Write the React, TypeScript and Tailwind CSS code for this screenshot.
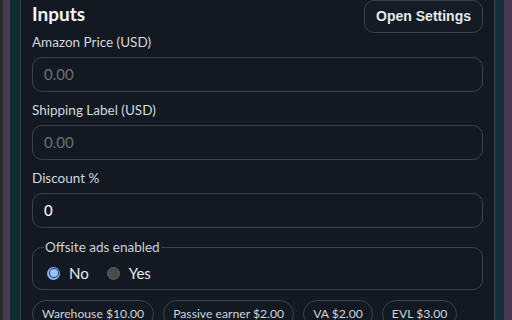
import React from "react";

const font = { fontFamily: "Lato, 'Noto Sans', sans-serif" };

function Field({ label, value, placeholder, first }: { label: string; value?: string; placeholder?: string; first?: boolean }) {
  return (
    <div className={first ? "mt-[0px]" : "mt-[8px]"}>
      <div className="text-[13.5px] leading-[20px] text-[#d3d8de] mb-[5px]">{label}</div>
      <div className="h-[35px] rounded-[10px] border border-[#3a424c] bg-[#121922] flex items-center px-[11px]">
        {value !== undefined ? (
          <span className="text-[15px] text-[#f3f4f6] font-medium">{value}</span>
        ) : (
          <span className="text-[15px] text-[#6a7079]">{placeholder}</span>
        )}
      </div>
    </div>
  );
}

function Chip({ text }: { text: string }) {
  return (
    <div className="h-[28px] rounded-full border border-[#3a424c] px-[9px] flex items-center text-[12.2px] text-[#cfd4da] whitespace-nowrap">
      {text}
    </div>
  );
}

export default function App() {
  return (
    <div className="w-[512px] h-[320px] overflow-hidden flex bg-[#131a23]" style={font}>
      <div className="w-[3px] bg-[#2e2a33]" />
      <div className="w-[7px] bg-[#463b4f]" />
      <div className="w-[10px] bg-[#0f2d30]" />
      <div className="flex-1 border-x border-[#34454c] bg-[#121922] px-[11px]">
        <div className="flex justify-between items-start h-[32px]">
          <div className="text-[19px] leading-[24px] font-bold text-[#f2f4f7] mt-[2px]">Inputs</div>
          <button
            className="h-[33px] rounded-[10px] border border-[#3a424c] bg-[#141b24] px-[11px] text-[14px] font-bold text-[#e6e9ed]"
            style={{ fontFamily: "'Liberation Sans', Arial, sans-serif" }}
          >
            Open Settings
          </button>
        </div>
        <Field first label="Amazon Price (USD)" placeholder="0.00" />
        <Field label="Shipping Label (USD)" placeholder="0.00" />
        <Field label="Discount %" value="0" />
        <fieldset className="mt-[11px] rounded-[10px] border border-[#3a424c] px-[11px] h-[51px]">
          <legend className="px-[1px] text-[13.5px] leading-[16px] text-[#cdd2d8]">Offsite ads enabled</legend>
          <div className="flex items-center mt-[8px] h-[20px]">
            <span className="w-[13px] h-[13px] rounded-full bg-[#8ab4f8] border-[2px] border-[#8ab4f8] flex items-center justify-center ml-[3px]">
              <span className="w-[8px] h-[8px] rounded-full bg-[#9cc2ff] ring-1 ring-[#1d3a5e]" />
            </span>
            <span className="ml-[9px] text-[15px] text-[#e9ecef]">No</span>
            <span className="ml-[18px] w-[13px] h-[13px] rounded-full bg-[#4a4a4a] border border-[#5c5c5c]" />
            <span className="ml-[9px] text-[15px] text-[#e9ecef]">Yes</span>
          </div>
        </fieldset>
        <div className="flex gap-[9px] mt-[10px]">
          <Chip text="Warehouse $10.00" />
          <Chip text="Passive earner $2.00" />
          <Chip text="VA $2.00" />
          <Chip text="EVL $3.00" />
        </div>
      </div>
      <div className="w-[9px] bg-[#15303a]" />
      <div className="w-[8px] bg-[#473b52]" />
    </div>
  );
}
